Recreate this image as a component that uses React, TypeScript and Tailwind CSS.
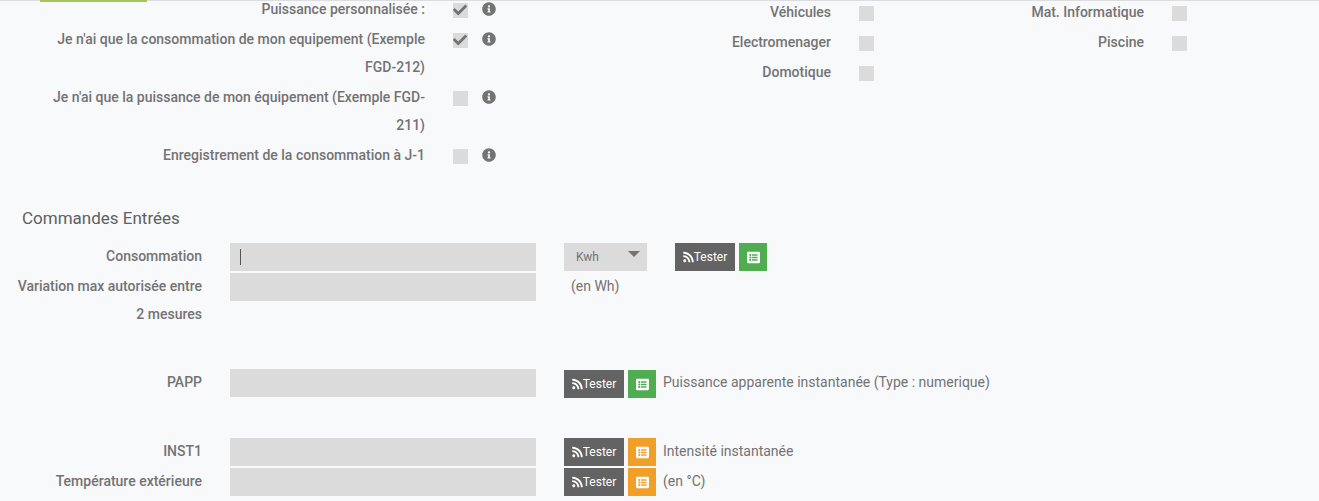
import React from 'react';
import { FaCheck, FaInfoCircle, FaListAlt, FaRss } from 'react-icons/fa';

interface CheckProps {
    id: string;
    label: string;
    checked?: boolean;
    info?: boolean;
}

const powerOptions: CheckProps[] = [
    { id: 'custom-power', label: 'Puissance personnalisée :', checked: true, info: true },
    { id: 'only-conso', label: "Je n'ai que la consommation de mon equipement (Exemple FGD-212)", checked: true, info: true },
    { id: 'only-power', label: "Je n'ai que la puissance de mon équipement (Exemple FGD-211)", info: true },
    { id: 'record-day', label: 'Enregistrement de la consommation à J-1', info: true },
];

const categories: CheckProps[][] = [
    [
        { id: 'cat-vehicules', label: 'Véhicules' },
        { id: 'cat-electro', label: 'Electromenager' },
        { id: 'cat-domotique', label: 'Domotique' },
    ],
    [
        { id: 'cat-info', label: 'Mat. Informatique' },
        { id: 'cat-piscine', label: 'Piscine' },
    ],
];

const CheckControl: React.FC<CheckProps> = ({ id, checked, info }) => (
    <div className="flex h-7 items-center">
        <span className="relative mt-[3px] h-[15px] w-[15px]">
            <input
                id={id}
                type="checkbox"
                defaultChecked={checked}
                className="peer block h-[15px] w-[15px] appearance-none bg-[#dbdbdb] outline-none"
            />
            <FaCheck className="pointer-events-none absolute top-0 left-0 hidden h-[14px] w-[14px] peer-checked:block" />
        </span>
        {info && <FaInfoCircle className="ml-[14px] h-[14px] w-[14px]" />}
    </div>
);

const TesterButton = () => (
    <button type="button" className="flex h-7 w-[60px] items-center justify-center bg-[#636363] text-xs text-white">
        <FaRss className="h-3 w-[11px]" />
        Tester
    </button>
);

const ListButton: React.FC<{ tone: 'green' | 'orange' }> = ({ tone }) => (
    <button
        type="button"
        aria-label="Choisir une commande"
        className={`flex h-7 w-7 items-center justify-center text-white ${tone === 'green' ? 'bg-[#4fac50]' : 'bg-[#f0a029]'}`}
    >
        <FaListAlt className="h-[13px] w-[13px]" />
    </button>
);

const CommandRow: React.FC<{ id: string; label: string; focused?: boolean; children: React.ReactNode }> = ({ id, label, focused, children }) => (
    <div className="mb-px grid grid-cols-[202px_minmax(0,306fr)_minmax(0,755fr)] gap-x-7">
        <label htmlFor={id} className="pl-3 text-right font-medium">{label}</label>
        <div className="relative pt-px">
            <input id={id} type="text" className="block h-7 w-full bg-[#dbdbdb] px-[10px] caret-transparent outline-none" />
            {focused && <span className="absolute top-[7px] left-[10px] h-4 w-px bg-[#555555]" />}
        </div>
        <div className="flex items-start">{children}</div>
    </div>
);

export default function App() {
    return (
        <div className="min-h-screen overflow-hidden bg-[#f8f9fb] font-['Roboto',sans-serif] text-sm leading-7 text-[#737373]">
            <header className="h-px bg-[#dcdde0]">
                <div className="ml-10 h-0.5 w-[107px] bg-[#a3c65c]" />
            </header>

            <form>
                {/* Options */}
                <section className="-mt-1.5 grid grid-cols-[687fr_313fr_313fr] pr-1.5">
                    <div>
                        {powerOptions.map((o) => (
                            <div key={o.id} className="mb-0.5 grid grid-cols-[425fr_234fr] gap-x-7">
                                <label htmlFor={o.id} className="pl-12 text-right font-medium">{o.label}</label>
                                <CheckControl {...o} />
                            </div>
                        ))}
                    </div>
                    {categories.map((column, i) => (
                        <div key={i} className="pt-[3px]">
                            {column.map((o) => (
                                <div key={o.id} className="mb-0.5 grid grid-cols-[144fr_141fr] gap-x-7">
                                    <label htmlFor={o.id} className="text-right font-medium">{o.label}</label>
                                    <CheckControl {...o} />
                                </div>
                            ))}
                        </div>
                    ))}
                </section>

                {/* Commandes */}
                <section>
                    <h2 className="mt-[33px] mb-2.5 pl-[22px] text-[17px] leading-7 text-[#5f5f5f]">Commandes Entrées</h2>

                    <CommandRow id="conso" label="Consommation" focused>
                        <div className="flex pt-px">
                            <div className="relative">
                                <select aria-label="Unité" className="block h-7 w-[83px] appearance-none bg-[#dbdbdb] pl-3 text-xs outline-none">
                                    <option>Kwh</option>
                                    <option>Wh</option>
                                </select>
                                <svg className="pointer-events-none absolute top-2 right-[7px] h-1.5 w-3" viewBox="0 0 12 6" fill="currentColor">
                                    <path d="M0 0h12L6 6z" />
                                </svg>
                            </div>
                            <div className="ml-7 flex gap-1">
                                <TesterButton />
                                <ListButton tone="green" />
                            </div>
                        </div>
                    </CommandRow>
                    <CommandRow id="variation" label="Variation max autorisée entre 2 mesures">
                        <span className="pl-[7px]">(en Wh)</span>
                    </CommandRow>

                    <div className="mt-10">
                        <CommandRow id="papp" label="PAPP">
                            <div className="flex gap-1 pt-0.5">
                                <TesterButton />
                                <ListButton tone="green" />
                            </div>
                            <span className="pl-[7px]">Puissance apparente instantanée (Type : numerique)</span>
                        </CommandRow>
                    </div>

                    <div className="mt-[39px]">
                        <CommandRow id="inst1" label="INST1">
                            <div className="flex gap-1 pt-px">
                                <TesterButton />
                                <ListButton tone="orange" />
                            </div>
                            <span className="pl-[7px]">Intensité instantanée</span>
                        </CommandRow>
                        <CommandRow id="temp-ext" label="Température extérieure">
                            <div className="flex gap-1 pt-px">
                                <TesterButton />
                                <ListButton tone="orange" />
                            </div>
                            <span className="pl-[7px]">(en °C)</span>
                        </CommandRow>
                    </div>
                </section>
            </form>
        </div>
    );
}
